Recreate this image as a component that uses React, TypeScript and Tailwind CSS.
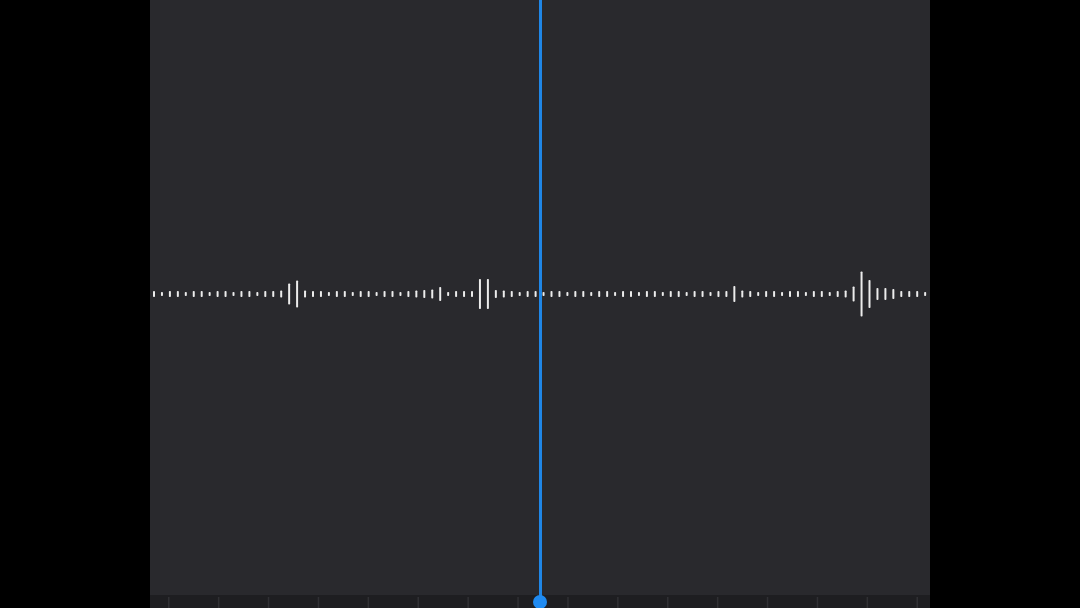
const BAR_COUNT = 98;
const BAR_STEP = 7.95;

// heights of the few louder bars; everything else is a small tick
const LOUD: Record<number, number> = {
  16: 7,
  17: 21,
  18: 27,
  19: 7,
  33: 7,
  34: 8,
  35: 9,
  36: 14,
  40: 6,
  41: 30,
  42: 30,
  43: 8,
  44: 7,
  72: 6,
  73: 16,
  74: 7,
  87: 7,
  88: 15,
  89: 45,
  90: 28,
  91: 12,
  92: 12,
  93: 10,
  94: 6,
};

const bars = Array.from({ length: BAR_COUNT }, (_, i) => {
  const small = i % 3 === 1 ? 4 : 6;
  return { x: 3 + i * BAR_STEP, h: LOUD[i] ?? small };
});

const ticks = Array.from({ length: 16 }, (_, i) => 18 + i * 49.9);

function Waveform() {
  return (
    <svg width="780" height="60" viewBox="0 0 780 60" className="block">
      {bars.map((b, i) => (
        <rect key={i} x={b.x} y={30 - b.h / 2} width="2" height={b.h} rx="0.8" fill="#ececec" />
      ))}
    </svg>
  );
}

function Ruler() {
  return (
    <svg width="780" height="13" viewBox="0 0 780 13" className="block">
      <rect width="780" height="13" fill="#1e1e21" />
      {ticks.map((x, i) => (
        <rect key={i} x={x} y="2" width="1.5" height="11" fill="#303034" />
      ))}
    </svg>
  );
}

export default function App() {
  return (
    <div className="flex h-[608px] w-[1080px] justify-center overflow-hidden bg-black">
      <div className="relative flex w-[780px] flex-col bg-[#29292d]">
        <div className="flex flex-1 items-center pb-[8px]">
          <Waveform />
        </div>
        <Ruler />
        {/* playhead */}
        <div className="absolute left-[389px] top-0 h-[602px] w-[2.5px] bg-[#1f86e6]" />
        <div className="absolute left-[383px] top-[595px] h-[14px] w-[14px] rounded-full bg-[#1f8af0]" />
      </div>
    </div>
  );
}
